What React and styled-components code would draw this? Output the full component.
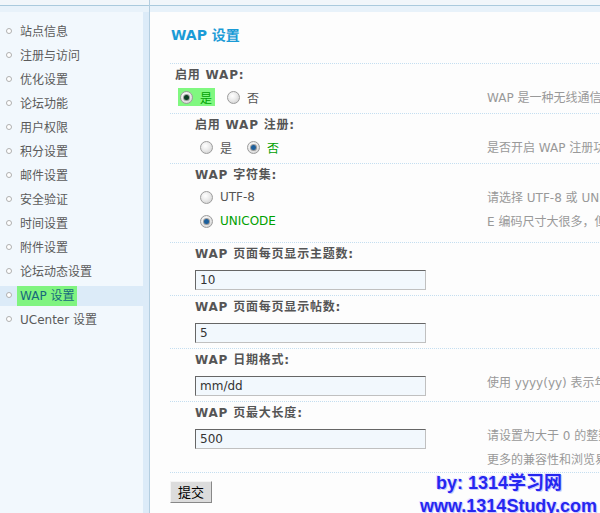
import React from "react";
import styled, { createGlobalStyle } from "styled-components";

const GlobalStyle = createGlobalStyle`
    html, body {
        margin: 0;
        padding: 0;
        width: 600px;
        height: 513px;
        overflow: hidden;
        background: #fdfdfd;
    }
    body {
        font-family: "DejaVu Sans", "Noto Sans CJK SC", sans-serif;
        font-size: 12px;
        color: #555;
    }
`;

const Frame = styled.div`
    position: relative;
    display: flex;
    width: 600px;
    height: 513px;
    overflow: hidden;
`;

const TopStrip = styled.div`
    height: 5px;
    background: #f1f6fa;
    border-bottom: 1px solid #aacadd;
    flex-shrink: 0;
`;

const TopBand = styled.div`
    height: 6px;
    background: #e8f2fa;
    flex-shrink: 0;
`;

// sidebar
const Side = styled.div`
    width: 149px;
    display: flex;
    flex-direction: column;
    flex-shrink: 0;
`;

const SideBody = styled.div`
    flex: 1;
    display: flex;
`;

const Menu = styled.ul`
    list-style: none;
    margin: 0;
    padding: 10px 0 0;
    width: 143px;
    background: #f2f8fd;
`;

const SideEdge = styled.div`
    width: 6px;
    background: #dcebf8;
`;

const Divider = styled.div`
    width: 1px;
    background: #b4cee0;
    flex-shrink: 0;
`;

const MenuItem = styled.li`
    position: relative;
    height: 20px;
    line-height: 20px;
    margin-bottom: 4px;
    padding-left: 20px;
    color: ${(p) => (p.$active ? "#17697c" : "#5a5a5a")};
    background: ${(p) => (p.$active ? "#dcebf8" : "transparent")};
    &::before {
        content: "";
        position: absolute;
        left: 6px;
        top: 6px;
        width: 4px;
        height: 4px;
        border-radius: 50%;
        border: 1px solid #b0b0b0;
        background: #fff;
    }
`;

const MenuMark = styled.span`
    display: inline-block;
    margin-left: -3px;
    padding: 0 3px;
    background: #80f480;
`;

// main
const Main = styled.div`
    flex: 1;
    display: flex;
    flex-direction: column;
`;

const Content = styled.div`
    flex: 1;
    padding-left: 20px;
    background: #fdfdfd;
`;

const Title = styled.h1`
    margin: 0;
    box-sizing: border-box;
    height: 51px;
    padding: 13px 0 0 1px;
    line-height: 20px;
    font-size: 14px;
    font-weight: bold;
    color: #1b9bd6;
`;

const Row = styled.div`
    display: grid;
    grid-template-columns: 317px 300px;
    box-sizing: border-box;
    height: ${(p) => p.$h}px;
    border-top: 1px dotted #c4def0;
`;

const Cell = styled.div`
    padding: 3px 0 0 ${(p) => p.$indent}px;
`;

const Label = styled.div`
    line-height: 16px;
    font-weight: bold;
    letter-spacing: 0.8px;
    color: #555;
`;

const Options = styled.div`
    display: flex;
    flex-direction: ${(p) => (p.$stack ? "column" : "row")};
    margin-top: 2px;
    padding-left: 5px;
`;

const Option = styled.label`
    display: inline-flex;
    align-items: center;
    height: 24px;
    margin-right: 15px;
    color: ${(p) => (p.$checked ? "#00a000" : "#555")};
`;

const Mark = styled.span`
    display: inline-flex;
    align-items: center;
    height: 18px;
    margin-left: -2px;
    margin-right: -3px;
    padding: 0 3px 0 2px;
    background: #80f880;
`;

const Radio = styled.span`
    box-sizing: border-box;
    width: 13px;
    height: 13px;
    margin-right: 7px;
    border-radius: 50%;
    border: 1px solid #9c9c9c;
    background: radial-gradient(circle at 40% 35%, #ffffff 0%, #ebebeb 45%, #c8c8c8 100%);
    display: inline-flex;
    align-items: center;
    justify-content: center;
    &::after {
        content: "";
        width: 5px;
        height: 5px;
        border-radius: 50%;
        background: ${(p) => (p.$on ? p.$dot : "transparent")};
        box-shadow: ${(p) => (p.$on ? "0 0 0 1px rgba(0,0,0,0.35)" : "none")};
    }
`;

const Input = styled.div`
    box-sizing: border-box;
    width: 231px;
    height: 20px;
    margin-top: 8px;
    padding-left: 4px;
    line-height: 18px;
    color: #333;
    background: #f2f8fd;
    border-top: 1px solid #666;
    border-left: 1px solid #666;
    border-bottom: 1px solid #c0c0c0;
    border-right: 1px solid #c0c0c0;
`;

const Desc = styled.div`
    padding-top: 22px;
    line-height: 24px;
    color: #999;
    white-space: nowrap;
`;

const Footer = styled.div`
    border-top: 1px dotted #c4def0;
    padding-top: 8px;
`;

const Submit = styled.button`
    box-sizing: border-box;
    width: 42px;
    height: 22px;
    padding: 0;
    font-family: "Noto Sans CJK SC", sans-serif;
    font-size: 13px;
    line-height: 18px;
    color: #000;
    background: #dcdcdc;
    border: 1px solid;
    border-color: #f4f4f4 #888 #888 #f4f4f4;
`;

const Stamp = styled.div`
    position: absolute;
    left: ${(p) => p.$x}px;
    top: ${(p) => p.$y}px;
    font-family: "Liberation Sans", "Noto Sans CJK SC", sans-serif;
    font-weight: bold;
    font-size: 18px;
    line-height: 22px;
    color: #2626f0;
    white-space: nowrap;
    text-shadow: 1px 1px 0 #c8c8ff, -1px -1px 0 #e4e4ff;
`;

const menu = [
    "站点信息",
    "注册与访问",
    "优化设置",
    "论坛功能",
    "用户权限",
    "积分设置",
    "邮件设置",
    "安全验证",
    "时间设置",
    "附件设置",
    "论坛动态设置",
    "WAP 设置",
    "UCenter 设置",
];

const Choice = ({ text, on, dot = "#1c5f9c" }) => (
    <Option $checked={on}>
        <Radio $on={on} $dot={dot} />
        {text}
    </Option>
);

const App = () => (
    <Frame>
        <GlobalStyle />
        <Side>
            <TopStrip />
            <TopBand />
            <SideBody>
                <Menu>
                    {menu.map((m) =>
                        m === "WAP 设置" ? (
                            <MenuItem key={m} $active>
                                <MenuMark>{m}</MenuMark>
                            </MenuItem>
                        ) : (
                            <MenuItem key={m}>{m}</MenuItem>
                        )
                    )}
                </Menu>
                <SideEdge />
            </SideBody>
        </Side>
        <Divider />
        <Main>
            <TopStrip />
            <TopBand />
            <Content>
                <Title>WAP 设置</Title>

                <Row $h={50}>
                    <Cell $indent={5}>
                        <Label>启用 WAP:</Label>
                        <Options>
                            <Option $checked>
                                <Mark>
                                    <Radio $on $dot="#0b3d22" />
                                    是
                                </Mark>
                            </Option>
                            <Choice text="否" on={false} />
                        </Options>
                    </Cell>
                    <Desc>WAP 是一种无线通信应用协议，开启后用户可以通过手机访问论坛</Desc>
                </Row>

                <Row $h={50}>
                    <Cell $indent={25}>
                        <Label>启用 WAP 注册:</Label>
                        <Options>
                            <Choice text="是" on={false} />
                            <Choice text="否" on />
                        </Options>
                    </Cell>
                    <Desc>是否开启 WAP 注册功能</Desc>
                </Row>

                <Row $h={79}>
                    <Cell $indent={25}>
                        <Label>WAP 字符集:</Label>
                        <Options $stack>
                            <Choice text="UTF-8" on={false} />
                            <Choice text="UNICODE" on />
                        </Options>
                    </Cell>
                    <Desc>
                        请选择 UTF-8 或 UNICODE 作为 WAP 页面的字符集，UNICOD
                        <br />
                        E 编码尺寸大很多，但兼容性更好
                    </Desc>
                </Row>

                <Row $h={53}>
                    <Cell $indent={25}>
                        <Label>WAP 页面每页显示主题数:</Label>
                        <Input>10</Input>
                    </Cell>
                    <Desc />
                </Row>

                <Row $h={53}>
                    <Cell $indent={25}>
                        <Label>WAP 页面每页显示帖数:</Label>
                        <Input>5</Input>
                    </Cell>
                    <Desc />
                </Row>

                <Row $h={53}>
                    <Cell $indent={25}>
                        <Label>WAP 日期格式:</Label>
                        <Input>mm/dd</Input>
                    </Cell>
                    <Desc>使用 yyyy(yy) 表示年，mm 表示月，dd 表示天</Desc>
                </Row>

                <Row $h={71}>
                    <Cell $indent={25}>
                        <Label>WAP 页最大长度:</Label>
                        <Input>500</Input>
                    </Cell>
                    <Desc>
                        请设置为大于 0 的整数，建议设置为 500 以下以获得
                        <br />
                        更多的兼容性和浏览易用性
                    </Desc>
                </Row>

                <Footer>
                    <Submit>提交</Submit>
                </Footer>
            </Content>
        </Main>
        <Stamp $x={436} $y={472}>by: 1314学习网</Stamp>
        <Stamp $x={420} $y={495}>www.1314Study.com</Stamp>
    </Frame>
);

export default App;
